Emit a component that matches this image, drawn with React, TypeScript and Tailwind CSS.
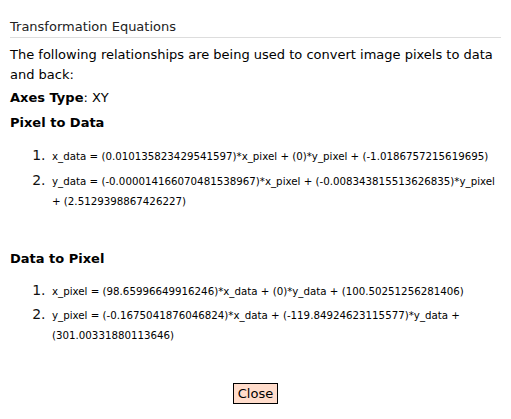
export default function App() {
  const font = { fontFamily: '"DejaVu Sans", Verdana, sans-serif' };

  const pixelToData = [
    "x_data = (0.010135823429541597)*x_pixel + (0)*y_pixel + (-1.0186757215619695)",
    "y_data = (-0.000014166070481538967)*x_pixel + (-0.008343815513626835)*y_pixel + (2.5129398867426227)",
  ];
  const dataToPixel = [
    "x_pixel = (98.65996649916246)*x_data + (0)*y_data + (100.50251256281406)",
    "y_pixel = (-0.1675041876046824)*x_data + (-119.84924623115577)*y_data + (301.00331880113646)",
  ];

  return (
    <div className="w-[511px] h-[419px] bg-white text-black px-[10px] pt-[18px]" style={font}>
      {/* Title */}
      <div className="text-[13px] text-[#222] leading-[18px] pb-[1px] border-b border-[#ddd]">
        Transformation Equations
      </div>

      <p className="mt-[7px] text-[13px] leading-[20px]">
        The following relationships are being used to convert image pixels to data and back:
      </p>
      <p className="mt-[3px] text-[13px] leading-[20px]">
        <b>Axes Type</b>: XY
      </p>
      <p className="mt-[5px] text-[13px] leading-[20px] font-bold">Pixel to Data</p>

      <ol className="list-decimal pl-[40px] mt-[12px] text-[10.25px] marker:text-[14px] marker:text-[#111]">
        {pixelToData.map((eq) => (
          <li key={eq} className="mb-[4px] leading-[20px] pl-[2px]">
            {eq}
          </li>
        ))}
      </ol>

      <p className="mt-[38px] text-[13px] leading-[20px] font-bold">Data to Pixel</p>

      <ol className="list-decimal pl-[40px] mt-[11px] text-[10.25px] marker:text-[14px] marker:text-[#111]">
        {dataToPixel.map((eq) => (
          <li key={eq} className="mb-[3px] leading-[20px] pl-[2px]">
            {eq}
          </li>
        ))}
      </ol>

      <div className="flex justify-center mt-[38px]">
        <button className="bg-[#ffdccb] border border-black px-[4px] text-[13px] leading-[19px]">
          Close
        </button>
      </div>
    </div>
  );
}
